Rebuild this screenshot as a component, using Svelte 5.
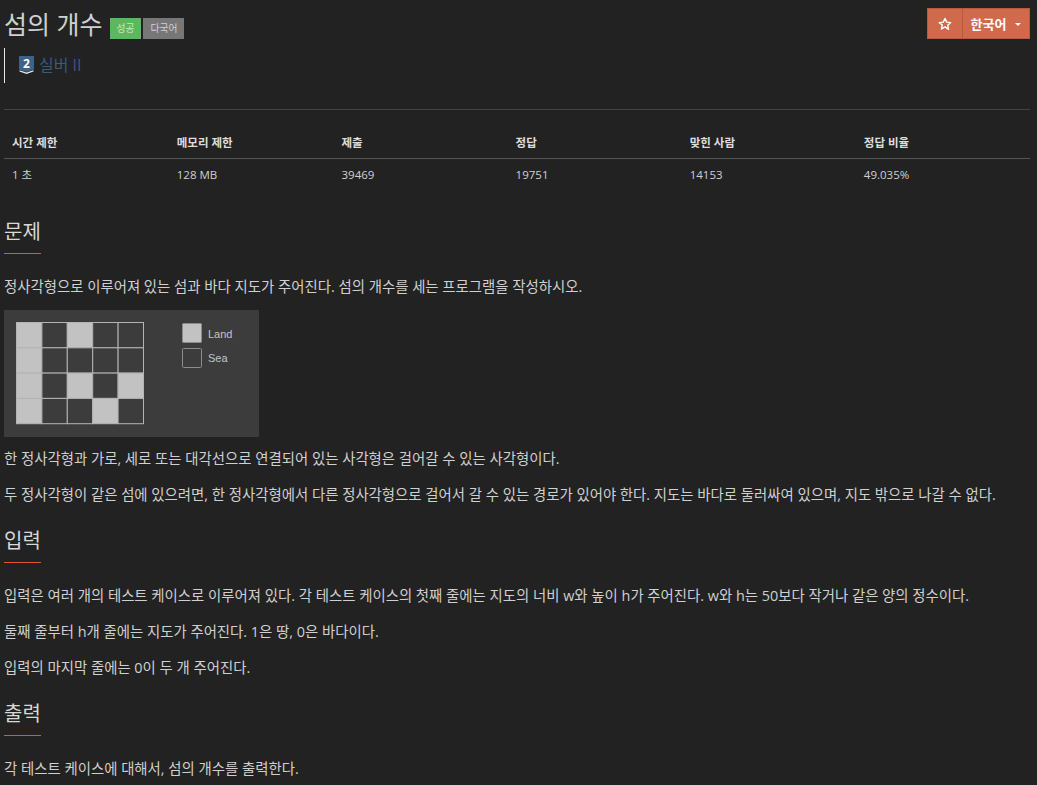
<script>
  const headers = ['시간 제한', '메모리 제한', '제출', '정답', '맞힌 사람', '정답 비율'];
  const values = ['1 초', '128 MB', '39469', '19751', '14153', '49.035%'];
  const widths = [16, 16, 17, 17, 17, 17];
  const grid = [
    [1, 0, 1, 0, 0],
    [1, 0, 0, 0, 0],
    [1, 0, 1, 0, 1],
    [1, 0, 0, 1, 0]
  ];
</script>

<main class="page">
  <header class="top">
    <div class="title-row">
      <h1>섬의 개수</h1>
      <span class="label green">성공</span>
      <span class="label grey">다국어</span>
    </div>
    <div class="btn-group">
      <button class="btn star" aria-label="즐겨찾기">
        <svg width="14" height="14" viewBox="0 0 24 24"><path d="M12 2.500l2.900 6.300 6.900.8-5.100 4.700 1.400 6.800L12 16.900l-6.100 3.500 1.400-6.800L2.200 9.600l6.900-.8z" fill="none" stroke="#fff" stroke-width="2.400" stroke-linejoin="round"/></svg>
      </button>
      <button class="btn lang">한국어<span class="caret"></span></button>
    </div>
  </header>

  <blockquote class="tier">
    <svg class="tier-icon" width="15" height="18" viewBox="0 0 15 18">
      <path d="M0 0H15V13.500L7.500 16L0 13.500Z" fill="#3f6289"/>
      <path d="M0.500 14.200L7.500 16.600L14.500 14.200V15.500L7.500 18L0.500 15.500Z" fill="#dfe6ee"/>
      <text x="7.500" y="12" class="tier-num">2</text>
    </svg>
    <a class="tier-name" href="#tier">실버 II</a>
  </blockquote>

  <hr />

  <table>
    <thead>
      <tr>
        {#each headers as h, i}
          <th style="width: {widths[i]}%">{h}</th>
        {/each}
      </tr>
    </thead>
    <tbody>
      <tr>
        {#each values as v}
          <td>{v}</td>
        {/each}
      </tr>
    </tbody>
  </table>

  <section class="first">
    <h2>문제</h2>
    <p>정사각형으로 이루어져 있는 섬과 바다 지도가 주어진다. 섬의 개수를 세는 프로그램을 작성하시오.</p>
    <svg class="map" width="255" height="127" viewBox="0 0 255 127">
      <rect width="255" height="127" fill="#3c3c3c"/>
      {#each grid as row, r}
        {#each row as cell, c}
          <rect x={12.500 + c * 25.400} y={12.500 + r * 25.300} width="25.400" height="25.300" fill={cell ? '#c2c2c2' : '#3c3c3c'} stroke="#b4b4b4" stroke-width="1"/>
        {/each}
      {/each}
      <rect x="178.500" y="13.500" width="19" height="19" rx="1" fill="#c2c2c2" stroke="#8c8c8c"/>
      <rect x="178.500" y="38.500" width="19" height="19" rx="1" fill="#3c3c3c" stroke="#8c8c8c"/>
      <text x="204" y="28" class="legend">Land</text>
      <text x="204" y="52" class="legend">Sea</text>
    </svg>
    <p>한 정사각형과 가로, 세로 또는 대각선으로 연결되어 있는 사각형은 걸어갈 수 있는 사각형이다.</p>
    <p>두 정사각형이 같은 섬에 있으려면, 한 정사각형에서 다른 정사각형으로 걸어서 갈 수 있는 경로가 있어야 한다. 지도는 바다로 둘러싸여 있으며, 지도 밖으로 나갈 수 없다.</p>
  </section>

  <section>
    <h2>입력</h2>
    <p>입력은 여러 개의 테스트 케이스로 이루어져 있다. 각 테스트 케이스의 첫째 줄에는 지도의 너비 w와 높이 h가 주어진다. w와 h는 50보다 작거나 같은 양의 정수이다.</p>
    <p>둘째 줄부터 h개 줄에는 지도가 주어진다. 1은 땅, 0은 바다이다.</p>
    <p>입력의 마지막 줄에는 0이 두 개 주어진다.</p>
  </section>

  <section>
    <h2>출력</h2>
    <p>각 테스트 케이스에 대해서, 섬의 개수를 출력한다.</p>
  </section>
</main>

<style>
  :global(body) {
    margin: 0;
    background: #222222;
    color: #d8d8d8;
    font-family: "Open Sans", "Noto Sans CJK KR", sans-serif;
    font-size: 14.400px;
    overflow: hidden;
  }
  .page {
    box-sizing: border-box;
    width: 1037px;
    height: 785px;
    overflow: hidden;
    padding: 0 7px 0 4px;
  }
  .top {
    display: flex;
    justify-content: space-between;
    align-items: flex-start;
    padding-top: 8px;
  }
  .title-row {
    display: flex;
    align-items: center;
    height: 32px;
  }
  h1 {
    margin: 0;
    font-size: 25px;
    font-weight: 400;
    line-height: 32px;
    color: #d0d0d0;
  }
  .label {
    display: inline-block;
    height: 21px;
    line-height: 21px;
    font-size: 9.750px;
    padding: 0 7px;
    margin-top: 8px;
    color: #d0d0d0;
  }
  .green {
    background: #5cb85c;
    color: #c8e6c8;
    margin-left: 7px;
  }
  .grey {
    background: #777777;
    margin-left: 2px;
  }
  .btn-group {
    display: flex;
  }
  .btn {
    height: 31px;
    background: #d1694d;
    border: 1px solid #b85a40;
    color: #ffffff;
    font: 700 13px "Open Sans", "Noto Sans CJK KR", sans-serif;
    padding: 0;
    display: flex;
    align-items: center;
    justify-content: center;
  }
  .star {
    width: 36px;
  }
  .lang {
    width: 68px;
    margin-left: -1px;
    gap: 9px;
  }
  .caret {
    width: 0;
    height: 0;
    border-left: 3.500px solid transparent;
    border-right: 3.500px solid transparent;
    border-top: 3.500px solid #fff;
    margin-top: 2px;
  }
  .tier {
    margin: 8px 0 0;
    height: 35px;
    border-left: 1px solid #e8e8e8;
    padding-left: 14px;
    display: flex;
    align-items: flex-start;
    gap: 5px;
    box-sizing: border-box;
  }
  .tier-icon {
    margin-top: 8px;
  }
  .tier-num {
    font: 700 12px "Open Sans", sans-serif;
    fill: #ffffff;
    text-anchor: middle;
  }
  .tier-name {
    color: #375a7f;
    font-size: 16px;
    line-height: 20px;
    margin-top: 7px;
    text-decoration: none;
  }
  hr {
    border: 0;
    border-top: 1px solid #444444;
    margin: 26px 0 0;
  }
  table {
    width: 100%;
    border-collapse: collapse;
    margin-top: 19px;
    font-size: 11.500px;
    table-layout: fixed;
  }
  th {
    text-align: left;
    padding: 6px 8px 7px;
    line-height: 16px;
    border-bottom: 1px solid #555555;
    font-weight: 700;
    color: #dddddd;
  }
  td {
    padding: 8px;
    line-height: 16px;
    color: #d0d0d0;
  }
  section {
    margin-top: 22px;
  }
  section.first {
    margin-top: 27px;
  }
  h2 {
    width: fit-content;
    margin: 0 0 23px;
    padding-bottom: 7px;
    border-bottom: 1px solid #e0572f;
    font-size: 20px;
    font-weight: 400;
    line-height: 28px;
    color: #d8d8d8;
  }
  p {
    margin: 0 0 16px;
    font-size: 14.400px;
    line-height: 20px;
    color: #d0d0d0;
  }
  .map {
    display: block;
    margin: -3px 0 12px;
  }
  .legend {
    font: 11px "Liberation Sans", sans-serif;
    fill: #c4c4c4;
  }
</style>
